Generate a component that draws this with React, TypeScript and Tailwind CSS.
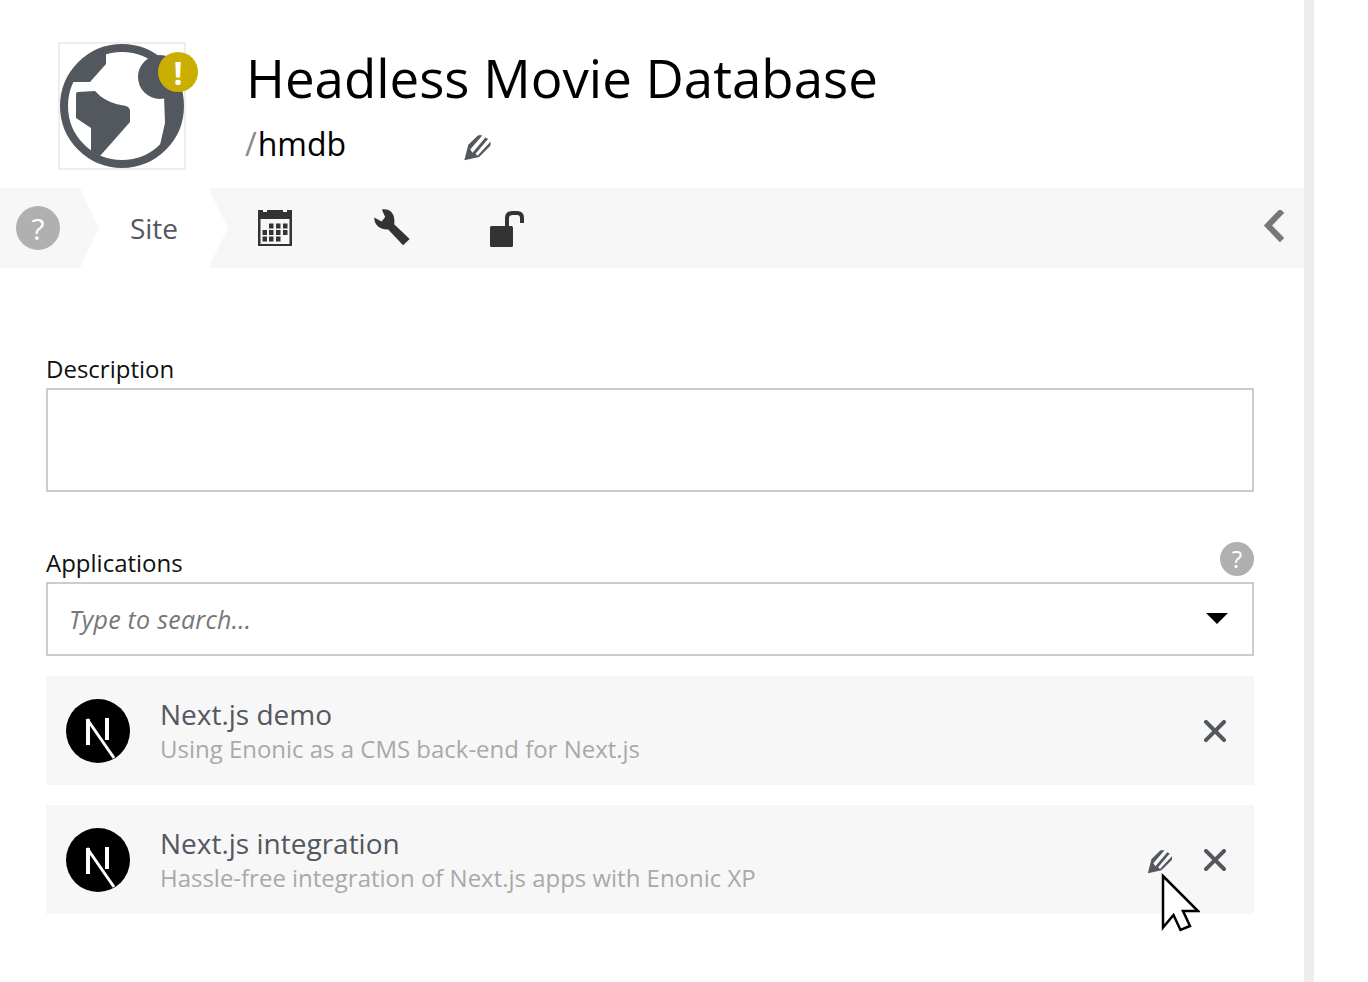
const font = 'font-["Open_Sans",sans-serif]';

function GlobeIcon() {
  return (
    <svg viewBox="0 0 124 124" className="w-[124px] h-[124px]">
      <circle cx="62" cy="62" r="58" fill="none" stroke="#53585f" strokeWidth="8" />
      <path d="M46 8 L46 20 L30 38 L10 38 L18 24 L30 12 Z" fill="#53585f" />
      <path d="M18 48 L35 47 C42 55 52 60 66 62 C69 63 70 65 70 67 L70 78 L40 112 L31 107 L31 84 L16 74 L16 50 Q16 48 18 48 Z" fill="#53585f" />
      <circle cx="100" cy="33" r="22" fill="#53585f" />
      <path d="M104 52 L105 79 L100 101 L110 92 L117 70 L116 48 Z" fill="#53585f" />
    </svg>
  );
}

function PencilIcon({ className }: { className: string }) {
  return (
    <svg viewBox="22 14 92 88" className={className}>
      <path
        d="M28 97 L40 50 L70 21 L83 21 L46 64 L53 74 L92 28 L100 32 L62 77 L68 83 L108 40 L107 53 L73 87 Z"
        fill="#53585f"
      />
    </svg>
  );
}

function NextLogo() {
  return (
    <svg viewBox="0 0 64 64" className="w-16 h-16 shrink-0">
      <circle cx="32" cy="32" r="32" fill="#000" />
      <path d="M20 20 H24 V46 H20 Z M39 19 H43 V41 H39 Z" fill="#fff" />
      <path d="M21 20 L48 59" stroke="#fff" strokeWidth="3" />
    </svg>
  );
}

function CalendarIcon() {
  return (
    <svg viewBox="0 0 34 36" className="w-[34px] h-9">
      <path d="M0 0 H5 V2 H9 V0 H25 V2 H29 V0 H34 V36 H0 Z" fill="#333" />
      <rect x="2.5" y="9" width="29" height="25" fill="#f7f7f7" />
      {[
        [11, 13.5], [18, 13.5], [25, 13.5],
        [4.5, 20], [11, 20], [18, 20], [25, 20],
        [4.5, 26.5], [11, 26.5], [18, 26.5],
      ].map(([x, y]) => (
        <rect key={`${x}-${y}`} x={x} y={y} width="4.5" height="5" fill="#333" />
      ))}
    </svg>
  );
}

function WrenchIcon() {
  return (
    <svg viewBox="60 245 130 130" className="w-[43px] h-[43px]">
      <path d="M73 280 L95 292 L106 278 L96 256 C115 252 133 262 134 290 L133 300 L180 345 L160 364 L115 316 C95 318 72 305 73 280 Z" fill="#333" />
    </svg>
  );
}

function LockIcon() {
  return (
    <svg viewBox="0 0 36 36" className="w-9 h-9">
      <rect x="0" y="15" width="23" height="21" rx="1.5" fill="#333" />
      <path d="M17 15 V7 Q17 2 23 2 H27 Q32 2 32 7 V12" fill="none" stroke="#333" strokeWidth="4" />
    </svg>
  );
}

function CloseIcon() {
  return (
    <svg viewBox="0 0 22 22" className="w-[22px] h-[22px] shrink-0">
      <path d="M2 2 L20 20 M20 2 L2 20" stroke="#53585f" strokeWidth="4" strokeLinecap="square" />
    </svg>
  );
}

function HelpDot({ size }: { size: string }) {
  return (
    <div className={`${size} rounded-full bg-[#b0b0b0] text-white flex items-center justify-center`}>?</div>
  );
}

function AppRow({ title, text, hovered }: { title: string; text: string; hovered?: boolean }) {
  return (
    <div className="h-[109px] bg-[#f7f7f7] flex items-center pl-5 pr-[28px]">
      <NextLogo />
      <div className="ml-[30px] flex-1 -mt-[3px]">
        <div className="text-[28px] leading-[38px] mb-[1px] text-[#53585f]">{title}</div>
        <div className="text-[23.98px] leading-[30px] text-[#a9a9a9]">{text}</div>
      </div>
      {hovered && <PencilIcon className="w-[28px] h-[27px] mr-[30px] mt-[3px]" />}
      <CloseIcon />
    </div>
  );
}

export default function App() {
  return (
    <div className={`${font} relative h-[982px] w-[1368px] overflow-hidden bg-white flex`}>
      <div className="w-[1304px] shrink-0">
        {/* Header */}
        <div className="h-[188px] flex pt-[42px] pl-[58px]">
          <div className="relative w-[128px] h-[128px] border-2 border-[#eeeeee] flex items-center justify-center">
            <GlobeIcon />
            <div className="absolute left-[98px] top-[8px] w-10 h-10 rounded-full bg-[#cbaf00] text-white flex items-center justify-center text-[32px] font-bold pt-[1px]">!</div>
          </div>
          <div className="ml-[60px] -mt-[2px]">
            <div className="text-[52.8px] leading-[76px] text-black">Headless Movie Database</div>
            <div className="flex items-center -ml-[1px] mt-[6px]">
              <span className="text-[32px] leading-[44px] text-[#8a8a8a]">/</span>
              <span className="text-[32px] leading-[44px] text-black ml-[1px]">hmdb</span>
              <PencilIcon className="w-[31px] h-[29px] ml-[116px] mt-[6px]" />
            </div>
          </div>
        </div>

        {/* Tab bar */}
        <div className="relative h-20 bg-[#f7f7f7] flex items-center">
          <div className="ml-4 text-[30px]">
            <HelpDot size="w-11 h-11" />
          </div>
          <div className="ml-5 w-[148px] h-20 bg-white [clip-path:polygon(0_0,128px_0,148px_50%,128px_100%,0_100%,19px_50%)] flex items-center justify-center">
            <span className="text-[28px] text-[#53585f]">Site</span>
          </div>
          <div className="ml-[30px] flex items-center">
            <CalendarIcon />
            <div className="ml-[78px] mt-[-1px]"><WrenchIcon /></div>
            <div className="ml-[77px] mt-[1px]"><LockIcon /></div>
          </div>
          <svg viewBox="0 0 22 32" className="absolute left-[1263px] top-[22px] w-[22px] h-8">
            <path d="M17 3 L5 15.5 L17 28" fill="none" stroke="#777777" strokeWidth="6" strokeLinecap="square" />
          </svg>
        </div>

        {/* Form */}
        <div className="pl-[46px] pr-[50px]">
          <div className="mt-[84px] text-[24px] leading-[34px] text-[#111]">Description</div>
          <div className="mt-[2px] h-[104px] border-2 border-[#cccccc]" />

          <div className="mt-[50px] h-[40px] flex items-end justify-between">
            <div className="text-[24px] leading-[34px] text-[#111] mb-[2px]">Applications</div>
            <div className="text-[24px] mb-[6px]"><HelpDot size="w-[34px] h-[34px]" /></div>
          </div>
          <div className="h-[74px] border-2 border-[#cccccc] flex items-center justify-between pl-[21px] pr-[24px]">
            <span className="italic text-[25px] tracking-[0.25px] text-[#777777] mt-[2px]">Type to search...</span>
            <div className="w-0 h-0 border-l-[11px] border-r-[11px] border-t-[11px] border-l-transparent border-r-transparent border-t-black -mt-[2px]" />
          </div>

          <div className="mt-5 flex flex-col gap-5">
            <AppRow title="Next.js demo" text="Using Enonic as a CMS back-end for Next.js" />
            <AppRow title="Next.js integration" text="Hassle-free integration of Next.js apps with Enonic XP" hovered />
          </div>
        </div>
      </div>
      <div className="w-[10px] bg-[#ededed]" />

      {/* Mouse pointer */}
      <svg viewBox="0 0 40 60" className="absolute left-[1160px] top-[873px] w-10 h-[60px]">
        <path d="M3 3 L38 38 H23 L30 53 L20.5 57 L13.5 42 L3 54.5 Z" fill="#fff" stroke="#000" strokeWidth="2.5" />
      </svg>
    </div>
  );
}
